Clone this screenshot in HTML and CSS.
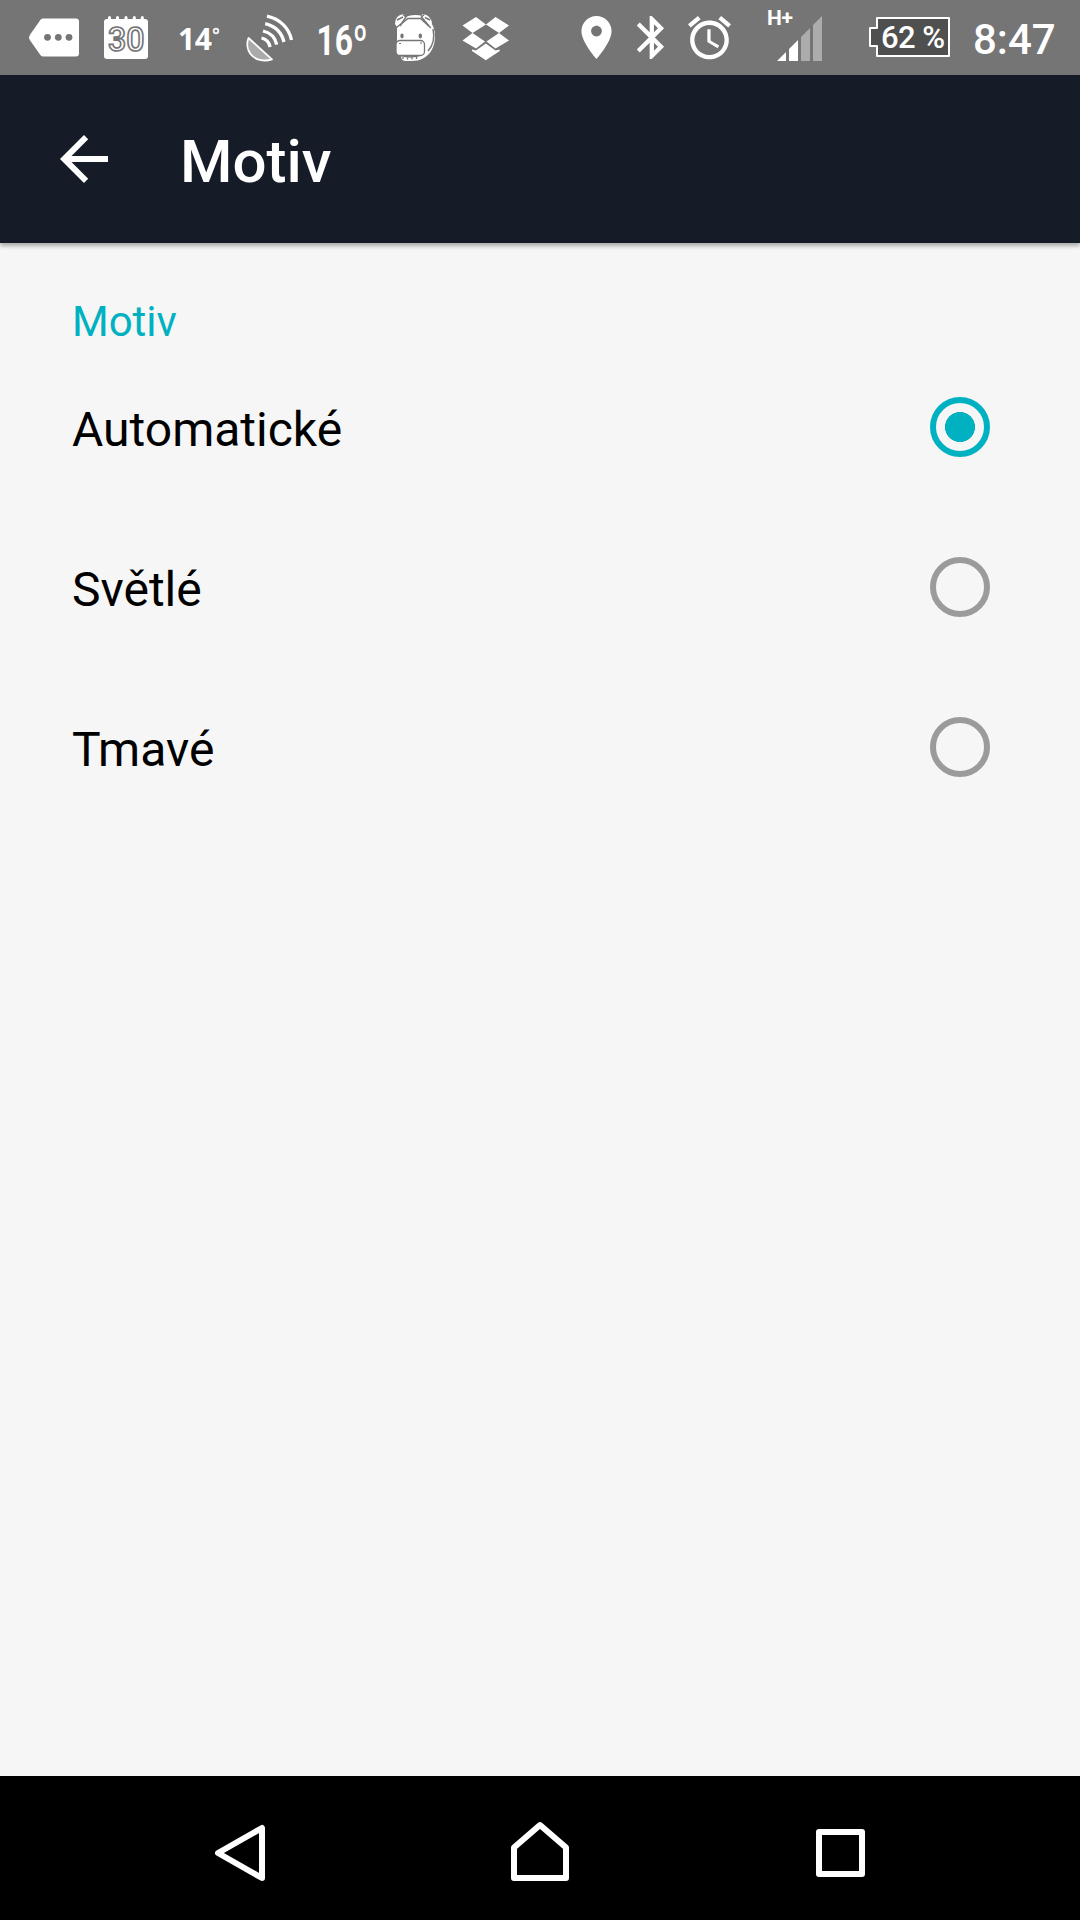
FILE: index.html
```html
<!DOCTYPE html>
<html lang="cs">
<head>
    <meta charset="UTF-8">
    <meta name="viewport" content="width=device-width, initial-scale=1.0">
    <title>Motiv</title>
    <link rel="stylesheet" href="styles.css">
</head>
<body>
    <div class="status-bar">
        <div class="status-left">
            <svg width="75" height="75" viewBox="20 0 75 75">
                <path d="M43 18.5H76Q79 18.5 79 21.5V53.5Q79 56.5 76 56.5H43Q41 56.5 40 54.5L29.8 40Q28.4 37.5 29.8 35L40 20.5Q41 18.5 43 18.5Z" fill="#fff"/>
                <g fill="#757575"><circle cx="47.5" cy="37.3" r="3.4"/><circle cx="58.3" cy="37.3" r="3.4"/><circle cx="69" cy="37.3" r="3.4"/></g>
            </svg>
            <svg width="70" height="75" viewBox="95 0 70 75">
                <rect x="104" y="19" width="44" height="40" rx="3" fill="#fff"/>
                <path d="M109.5 17.5V21M117.5 17.5V21M126 17.5V21M134.3 17.5V21M142.3 17.5V21" stroke="#fff" stroke-width="3" stroke-linecap="round"/>
                <text class="calendar-day" x="108" y="51" textLength="36.5" lengthAdjust="spacingAndGlyphs">30</text>
            </svg>
            <svg width="70" height="75" viewBox="165 0 70 75">
                <text class="temp-small" x="178" y="49.5" textLength="34">14</text>
                <circle cx="216" cy="31" r="2.3" fill="none" stroke="#eee" stroke-width="1.9"/>
            </svg>
            <svg width="70" height="75" viewBox="235 0 70 75">
                <path d="M248.5 38L272 59.3C264 62 255 60 250.5 54C247 49.5 246.5 43 248.5 38Z" fill="#aaa" stroke="#fff" stroke-width="1.8" stroke-linejoin="round"/>
                <g fill="none" stroke="#fff" stroke-width="3.3">
                    <path d="M267 16.2C280 19 289 28 291.5 40"/>
                    <path d="M265.2 23.6C275 26 281.5 32 284 42"/>
                    <path d="M263 31C270 32.5 275 37 276.7 44.6"/>
                    <path d="M261.5 38C266.5 39 269 42 270.2 47"/>
                </g>
            </svg>
            <svg width="75" height="75" viewBox="305 0 75 75">
                <text class="temp-large" x="316.5" y="54.5" textLength="51" lengthAdjust="spacingAndGlyphs">16º</text>
            </svg>
            <svg width="70" height="75" viewBox="380 0 70 75">
                <!-- hippo with goggles -->
                <path d="M397 27C400 19 407 15 415 15C427 15 435 23 435 36C435 50 427 61 412 61H405Q401 60.5 401 56L397 54Z" fill="#fff"/>
                <path d="M395 24Q395 15 404 14L407 19L397 27ZM422 14Q432 15 432 25L430 28L421 21Z" fill="#fff"/>
                <g fill="none" stroke="#757575" stroke-width="1.5">
                    <path d="M396.5 27.5L408 18.5H420.5L431 28"/>
                    <path d="M400 26L406 17L403 14.5M429 26L421.5 17L424 14.5"/>
                    <path d="M397 20L403 17M430 20L425 17.5"/>
                    <path d="M433 29Q436 42 428 51"/>
                    <path d="M401 55.5Q412 59 423 54"/>
                </g>
                <path d="M403 57V59M407.5 57.5V59.5M412 57.5V59.5M416.5 57V59" stroke="#757575" stroke-width="1.3"/>
                <rect x="396" y="40.5" width="28.5" height="15" rx="4" fill="#fff" stroke="#757575" stroke-width="1.3"/>
                <ellipse cx="402" cy="36" rx="1.7" ry="2.4" fill="#757575"/><ellipse cx="420.3" cy="36" rx="1.7" ry="2.4" fill="#757575"/>
                <path d="M399 43.5h2M420 43h2" stroke="#757575"/>
            </svg>
            <svg width="70" height="75" viewBox="450 0 70 75">
                <g fill="#fff">
                    <path d="M476 17L486 24.5L472.5 33L462.5 25.5ZM495.5 17L509 25.5L499 33L486 24.5ZM472.5 33L485 41.5L476 48.5L462.5 40.5ZM499 33L509 40.5L495.5 48.5L486.5 41.5Z"/>
                    <path d="M485.8 43.5L495.5 50.5L499.7 49.5V51L485.8 60.2L472 51V49.5L476 50.5Z"/>
                </g>
            </svg>
        </div>
        <div class="status-right">
            <svg width="55" height="75" viewBox="570 0 55 75">
                <path transform="translate(570.7 11.7) scale(2.15)" d="M12 2C8.13 2 5 5.13 5 9c0 5.25 7 13 7 13s7-7.75 7-13c0-3.87-3.13-7-7-7zm0 9.5c-1.38 0-2.5-1.12-2.5-2.5s1.12-2.5 2.5-2.5 2.5 1.12 2.5 2.5-1.12 2.5-2.5 2.5z" fill="#fff"/>
            </svg>
            <svg width="55" height="75" viewBox="625 0 55 75">
                <path transform="translate(626 11.7) scale(2.15)" d="M17.71 7.71L12 2h-1v7.59L6.41 5 5 6.41 10.59 12 5 17.59 6.41 19 11 14.41V22h1l5.71-5.71-4.3-4.29 4.3-4.29zM13 5.83l1.88 1.88L13 9.59V5.83zm1.88 10.46L13 18.17v-3.76l1.88 1.88z" fill="#fff"/>
            </svg>
            <svg width="70" height="75" viewBox="680 0 70 75">
                <path transform="translate(683.7 12) scale(2.15)" d="M22 5.72l-4.6-3.86-1.29 1.53 4.6 3.86L22 5.72zM7.88 3.39L6.6 1.86 2 5.71l1.29 1.53 4.59-3.85zM12.5 8H11v6l4.75 2.85.75-1.23-4-2.37V8zM12 4c-4.97 0-9 4.03-9 9s4.02 9 9 9c4.97 0 9-4.03 9-9s-4.03-9-9-9zm0 16c-3.87 0-7-3.13-7-7s3.13-7 7-7 7 3.13 7 7-3.13 7-7 7z" fill="#fff"/>
            </svg>
            <svg width="100" height="75" viewBox="750 0 100 75">
                <text class="network" x="767" y="25" textLength="26">H+</text>
                <path d="M777 61L786 52V61ZM789 61V49L798 40V61Z" fill="#fff"/>
                <path d="M801 61V37L810 28V61ZM813 61V25L822 16V61Z" fill="#acacac"/>
            </svg>
            <svg width="115" height="75" viewBox="850 0 115 75">
                <path d="M877 18H949V56H877V46H870V28H877Z" fill="#4f4f4f" stroke="#fff" stroke-width="2" stroke-linejoin="round"/>
                <text class="battery-level" x="881" y="48" textLength="64">62 %</text>
            </svg>
            <span class="clock">8:47</span>
        </div>
    </div>

    <div class="app-bar">
        <svg class="back-arrow" width="48" height="48" viewBox="0 0 48 48">
            <path d="M48 21H11.5L28.2 4.2L24 0L0 24L24 48L28.2 43.8L11.5 27H48Z" fill="#fff"/>
        </svg>
        <h1>Motiv</h1>
    </div>

    <div class="content">
        <h2>Motiv</h2>
        <label class="option">
            <span>Automatické</span>
            <input type="radio" name="theme" value="auto" checked>
        </label>
        <label class="option">
            <span>Světlé</span>
            <input type="radio" name="theme" value="light">
        </label>
        <label class="option">
            <span>Tmavé</span>
            <input type="radio" name="theme" value="dark">
        </label>
    </div>

    <div class="nav-bar">
        <svg width="300" height="144" viewBox="90 1776 300 144">
            <path d="M218 1853L262 1828V1878Z"/>
        </svg>
        <svg width="300" height="144" viewBox="390 1776 300 144">
            <path d="M540 1825L566 1847.5V1878H514V1847.5Z"/>
        </svg>
        <svg width="300" height="144" viewBox="690 1776 300 144">
            <path d="M819 1832H862V1874H819Z"/>
        </svg>
    </div>
</body>
</html>
```

FILE: styles.css
```css
* {
    box-sizing: border-box;
}

body {
    margin: 0;
    height: 1920px;
    display: flex;
    flex-direction: column;
    overflow: hidden;
    font-family: Roboto, sans-serif;
    background-color: #f6f6f6;
}

svg {
    display: block;
    flex: none;
}

/* Status bar */
.status-bar {
    display: flex;
    justify-content: space-between;
    height: 75px;
    padding: 0 25px 0 20px;
    background-color: #757575;
    color: #fff;
}

.status-left,
.status-right {
    display: flex;
}

.status-bar text {
    fill: #fff;
}

.status-bar .calendar-day {
    font-size: 33px;
    font-weight: 500;
    stroke: #757575;
    stroke-width: 1.7px;
}

.temp-small {
    font-family: "Open Sans", sans-serif;
    font-size: 30px;
    font-weight: 700;
}

.temp-large {
    font-size: 42px;
    font-weight: 700;
}

.network {
    font-size: 21px;
    font-weight: 700;
}

.battery-level {
    font-size: 31px;
    font-weight: 500;
}

.clock {
    width: 90px;
    padding: 2px 0 0 8px;
    font-size: 42px;
    font-weight: 500;
    line-height: 75px;
    white-space: nowrap;
}

/* App bar */
.app-bar {
    display: flex;
    align-items: center;
    height: 168px;
    padding: 0 60px;
    background-color: #161c27;
    color: #fff;
    box-shadow: 0 3px 4px rgba(0, 0, 0, 0.3);
}

.app-bar h1 {
    margin: 6px 0 0 72px;
    font-size: 60px;
    font-weight: 500;
    line-height: 72px;
}

/* Theme options */
.content {
    flex: 1;
    padding: 54px 90px 0 72px;
}

.content h2 {
    margin: 0;
    color: #00b1c1;
    font-size: 42px;
    font-weight: 400;
    line-height: 50px;
}

.option {
    display: flex;
    justify-content: space-between;
    align-items: center;
    height: 160px;
    font-size: 48px;
    color: #000;
}

.option span {
    padding-top: 4px;
}

.option input {
    appearance: none;
    width: 60px;
    height: 60px;
    margin: 0;
    border: 6px solid #9b9b9b;
    border-radius: 50%;
}

.option input:checked {
    border-color: #00b1c1;
    background: radial-gradient(circle, #00b1c1 14.7px, transparent 15.3px);
}

/* Navigation bar */
.nav-bar {
    display: flex;
    justify-content: center;
    height: 144px;
    background-color: #000;
}

.nav-bar path {
    fill: none;
    stroke: #fff;
    stroke-width: 6px;
    stroke-linejoin: round;
}
```
